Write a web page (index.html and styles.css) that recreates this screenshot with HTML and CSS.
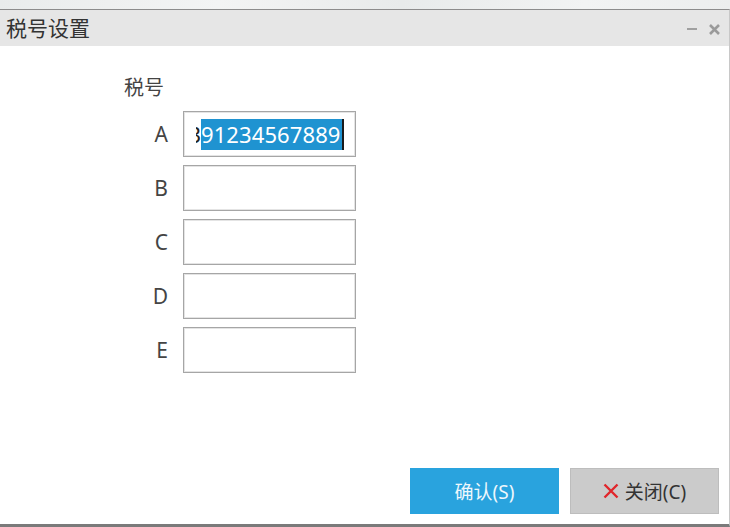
FILE: index.html
```html
<!DOCTYPE html>
<html lang="zh">
<head>
  <meta charset="UTF-8" />
  <title>税号设置</title>
  <link rel="stylesheet" href="styles.css">
</head>
<body>
  <div class="desk"></div>
  <div class="window">
    <div class="title-bar">
      <div class="title">税号设置</div>
      <div class="controls">
        <span class="ctrl-min"></span>
        <svg class="ctrl-close" width="11" height="11" viewBox="0 0 11 11">
          <path d="M1 1 L10 10 M10 1 L1 10" stroke="#9a9a9a" stroke-width="2.6" />
        </svg>
      </div>
    </div>

    <div class="content">
      <div class="section-label">税号</div>
      <div class="form-grid">
        <div class="field-label">A</div>
        <div class="field active">
          <span class="clip">3</span><span class="sel">91234567889</span><span class="caret"></span>
        </div>
        <div class="field-label">B</div>
        <div class="field"></div>
        <div class="field-label">C</div>
        <div class="field"></div>
        <div class="field-label">D</div>
        <div class="field"></div>
        <div class="field-label">E</div>
        <div class="field"></div>
      </div>
    </div>

    <div class="footer">
      <button class="btn btn-ok">确认(S)</button>
      <button class="btn btn-close">
        <svg width="16" height="16" viewBox="0 0 16 16">
          <path d="M1.5 1.5 L14.5 14.5 M14.5 1.5 L1.5 14.5" stroke="#e0262b" stroke-width="2.4" />
        </svg>
        关闭(C)
      </button>
    </div>
  </div>
</body>
</html>
```

FILE: styles.css
```css
html, body {
  margin: 0;
  height: 100%;
}

body {
  font-family: "Noto Sans", "Noto Sans CJK SC", sans-serif;
  color: #444;
  background-color: #eef0f0;
  overflow: hidden;
}

.desk {
  height: 9px;
  background: linear-gradient(100deg, #e9ecec 0%, #f3f4f4 30%, #e8ebeb 55%, #f2f3f3 80%, #eceeee 100%);
}

.window {
  height: 518px;
  display: flex;
  flex-direction: column;
  background-color: #ffffff;
  border-top: 1px solid #8c8c8c;
  border-bottom: 3px solid #7a7a7a;
  border-right: 1px solid #c8c8c8;
  box-sizing: border-box;
}

.title-bar {
  height: 36px;
  background-color: #e6e6e6;
  display: flex;
  align-items: center;
  justify-content: space-between;
  padding: 0 9px 0 6px;
  flex-shrink: 0;
}

.title {
  font-size: 21px;
  color: #333;
  line-height: 36px;
}

.controls {
  display: flex;
  align-items: center;
  gap: 12px;
  padding-top: 2px;
}

.ctrl-min {
  width: 10px;
  height: 2px;
  background-color: #a0a0a0;
}

.content {
  flex: 1;
  padding: 29px 0 0 124px;
}

.section-label {
  font-size: 20px;
  line-height: 26px;
  color: #444;
  margin-bottom: 10px;
}

.form-grid {
  display: grid;
  grid-template-columns: 44px 173px;
  column-gap: 15px;
  row-gap: 8px;
}

.field-label {
  font-size: 21px;
  text-align: right;
  line-height: 46px;
  color: #444;
}

.field {
  height: 46px;
  border: 1px solid #a6a6a6;
  box-sizing: border-box;
  box-shadow: inset 0 0 0 1px #e4e4e4;
  overflow: hidden;
  display: flex;
  align-items: center;
  white-space: nowrap;
}

.field.active .clip {
  font-size: 22px;
  color: #222;
  width: 5px;
  margin-left: 12px;
  overflow: hidden;
  direction: rtl;
}

.sel {
  background-color: #1f93d1;
  color: #ffffff;
  font-size: 22px;
  line-height: 31px;
  letter-spacing: 0.1px;
  padding-right: 1px;
}

.caret {
  width: 2px;
  height: 31px;
  background-color: #1a1a1a;
}

.footer {
  display: flex;
  justify-content: flex-end;
  gap: 11px;
  padding: 0 10px 10px 0;
}

.btn {
  width: 149px;
  height: 46px;
  border: none;
  font-family: "Noto Sans", "Noto Sans CJK SC", sans-serif;
  font-size: 19px;
  display: flex;
  align-items: center;
  justify-content: center;
  gap: 6px;
  cursor: pointer;
}

.btn-ok {
  background-color: #29a3de;
  color: #eef7fc;
}

.btn-close {
  background-color: #cbcbcb;
  border: 1px solid #bdbdbd;
  color: #333;
}
```
